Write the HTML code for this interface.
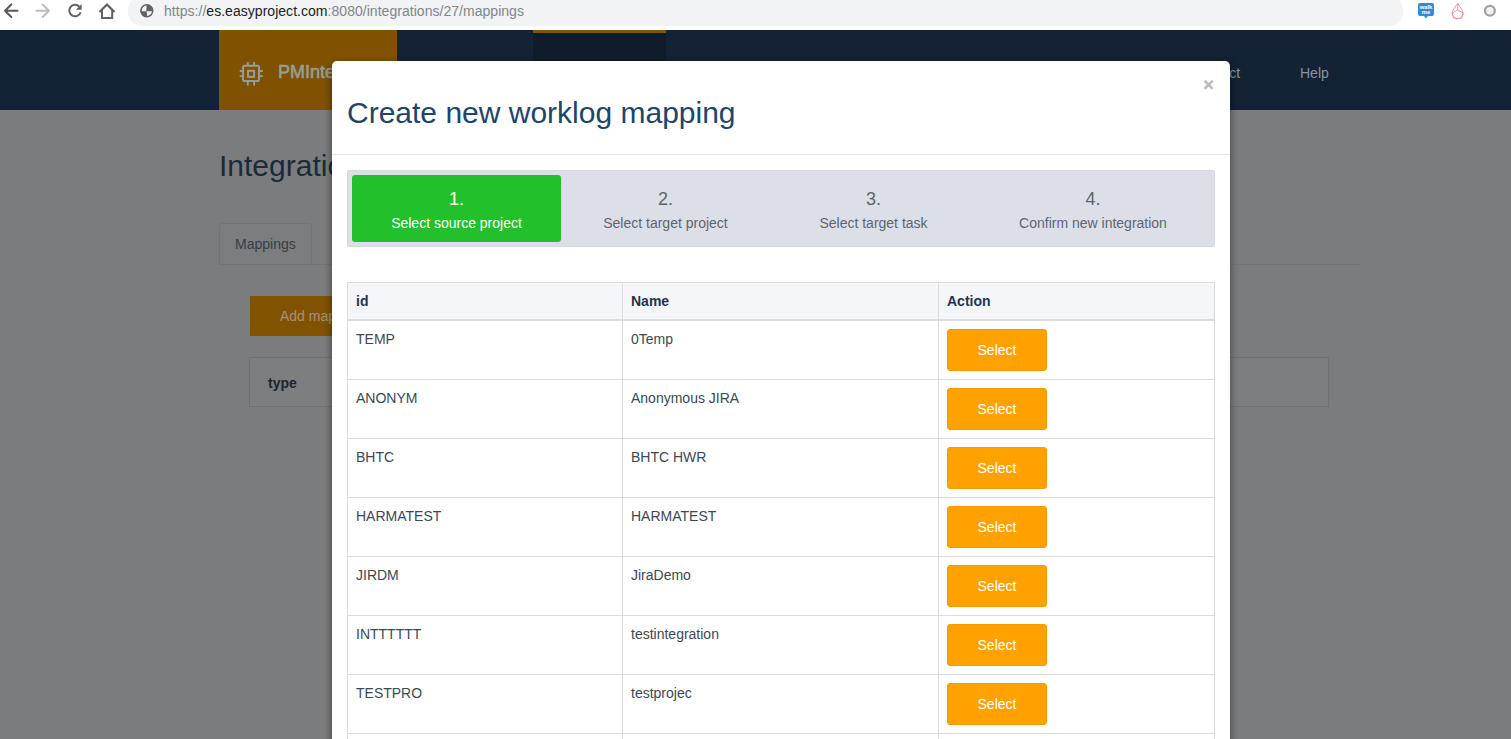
<!DOCTYPE html>
<html><head><meta charset="utf-8">
<style>
*{box-sizing:border-box;margin:0;padding:0}
html,body{width:1511px;height:739px;overflow:hidden;background:#7b7c7d;font-family:"Liberation Sans",sans-serif}
.abs{position:absolute}
#chrome{position:absolute;left:0;top:0;width:1511px;height:30px;background:#fff}
#url{position:absolute;left:128px;top:-4px;width:1275px;height:29.5px;background:#f1f3f4;border-radius:14px}
#urltext{position:absolute;left:164px;top:3px;font-size:14px;color:#80868b;white-space:nowrap;letter-spacing:0.035px}
#urltext b{font-weight:normal;color:#202124}
#hdr{position:absolute;left:0;top:30px;width:1511px;height:80px;background:#132234}
#logo{position:absolute;left:219px;top:30px;width:178px;height:80px;background:#805200}
#logotext{position:absolute;left:278px;top:62px;font-size:18px;color:#959d95;-webkit-text-stroke:0.6px #959d95}
#activebar{position:absolute;left:533px;top:30px;width:133px;height:3px;background:#7d5410}
#activebg{position:absolute;left:533px;top:33px;width:133px;height:77px;background:#111c2b}
.nav{position:absolute;top:65px;font-size:14px;color:#8b949e}
#page-title{position:absolute;left:219px;top:149px;font-size:30px;color:#1b2a3b}
#tab{position:absolute;left:219px;top:223px;width:93px;height:42px;border:1px solid #737475;border-bottom:none;border-radius:4px 4px 0 0;background:#7c7d7e}
#tabtext{position:absolute;left:235px;top:236px;font-size:14px;color:#383e45}
#tabline{position:absolute;left:219px;top:264px;width:1141px;height:1px;background:#737475}
#addbtn{position:absolute;left:250px;top:296px;width:120px;height:40px;background:#815300;border-radius:1px}
#addtext{position:absolute;left:280px;top:308px;font-size:14px;color:#a09479}
#typetbl{position:absolute;left:249px;top:357px;width:1080px;height:50px;border:1px solid #6f7071;background:#7d7e7f}
#typetext{position:absolute;left:268px;top:375px;font-size:14px;font-weight:bold;color:#1b2530}

#modal{position:absolute;left:332px;top:61px;width:898px;height:700px;background:#fff;border-radius:5px;box-shadow:0 3px 9px rgba(0,0,0,.5)}
#mtitle{position:absolute;left:15px;top:35px;font-size:30px;color:#21446a;white-space:nowrap}
#msep{position:absolute;left:0;top:93px;width:898px;height:1px;background:#e5e5e5}
#steps{position:absolute;left:15px;top:109px;width:868px;height:77px;background:#dcdfe8;border-radius:3px;box-shadow:inset 0 0 0 1px #d6d8e0}
.step{position:absolute;top:5px;height:67px;text-align:center;color:#5e6570}
.step .n{position:absolute;left:0;right:0;top:14px;font-size:18px}
.step .t{position:absolute;left:0;right:0;top:40px;font-size:14px}
#s1{left:5px;width:209px;background:#22c02a;border-radius:3px;color:#fff}
#s2{left:214px;width:209px}
#s3{left:422px;width:209px}
#s4{left:630px;width:232px}

#tbl{position:absolute;left:15px;top:221px;width:868px;height:520px;border:1px solid #dcdcdc;border-bottom:none}
#thead{position:absolute;left:0;top:0;width:866px;height:36px;background:#f5f6f9;border-bottom:0}
.hline{position:absolute;left:0;width:866px;height:1px;background:#dcdcdc}
.vline{position:absolute;top:0;width:1px;height:520px;background:#dcdcdc}
.th{position:absolute;top:8px;font-size:14px;line-height:20px;font-weight:bold;color:#1f3550}
.td{position:absolute;font-size:14px;line-height:20px;color:#3b4954}
.sel{position:absolute;left:599px;width:100px;height:42px;background:#ffa200;color:#fff;border-radius:3px;text-align:center;line-height:40px;font-size:14px;border:1px solid #f39c00}
</style></head>
<body>
<div id="chrome">
  <div id="url"></div>
  <svg class="abs" style="left:0;top:0" width="200" height="25" viewBox="0 0 200 25">
    <path d="M17.5 10.7H5M11.3 4.5L5 10.7l6.3 6.3" stroke="#56595d" stroke-width="2" fill="none" stroke-linecap="round" stroke-linejoin="round"/>
    <path d="M36.5 10.7h12.5M42.7 4.5l6.3 6.2-6.3 6.3" stroke="#bcbcbc" stroke-width="2" fill="none" stroke-linecap="round" stroke-linejoin="round"/>
    <path d="M80.6 12.2A5.8 5.8 0 1 1 79.3 6.6" stroke="#5f6368" stroke-width="2" fill="none"/>
    <path d="M81.6 4v5.7h-5.7z" fill="#5f6368"/>
    <path d="M99.5 12L107 4.5l7.5 7.5" stroke="#5f6368" stroke-width="2.2" fill="none"/>
    <path d="M102 10v7.9h10.2V10" stroke="#5f6368" stroke-width="2" fill="none"/>
    <circle cx="146.8" cy="10.7" r="6.7" fill="#5f6368"/>
    <path d="M141.7 11.3C141.7 8.2 143.6 5.9 146.4 5.6L146.6 7.6C145.7 8.7 147.2 10.1 146.1 11.3Z M152 11.3C151.8 14 149.8 15.8 146.9 15.9L147.2 14.2C146.3 13.3 147.4 12.2 146.4 11.3Z" fill="#f1f3f4"/>
  </svg>
  <div id="urltext">https://<b>es.easyproject.com</b>:8080/integrations/27/mappings</div>
  <svg class="abs" style="left:1410px;top:0" width="101" height="25" viewBox="1410 0 101 25">
    <path d="M1420 3h12a2 2 0 0 1 2 2v9a2 2 0 0 1-2 2h-4l-2 2.4-2-2.4h-4a2 2 0 0 1-2-2V5a2 2 0 0 1 2-2z" fill="#2d8ed6"/>
    <text x="1426" y="9.3" font-size="5.8" font-weight="bold" fill="#fff" text-anchor="middle" font-family="Liberation Sans">walk</text>
    <text x="1426" y="14.3" font-size="5.8" font-weight="bold" fill="#fff" text-anchor="middle" font-family="Liberation Sans">me</text>
    <path d="M1457.6 3.2C1455.8 6.5 1452 10.5 1452 13.5a5.6 5.4 0 0 0 11.2 0c0-3-3.8-7-5.6-10.3z M1457.6 3.2V10.1M1452.3 12.8L1457.6 10.1 1463 12.8 1461.5 18.3H1453.8z" stroke="#ea8f98" stroke-width="0.9" fill="none" stroke-linejoin="round"/>
    <circle cx="1489.9" cy="10.8" r="4.9" stroke="#a2a2a2" stroke-width="2.3" fill="#f2f2f2"/>
  </svg>
</div>
<div id="hdr"></div><div class="abs" style="left:0;top:105px;width:1511px;height:5px;background:#102038"></div>
<div id="logo"></div>
<svg class="abs" style="left:0;top:0" width="300" height="100" viewBox="0 0 300 100"><g stroke="#959d95" fill="none"><rect x="243.1" y="65.7" width="15.9" height="15.3" rx="1.5" stroke-width="2"/><rect x="248" y="70.8" width="6.1" height="6.1" stroke-width="2"/><path d="M247.8 62V65.7M254.1 62V65.7M247.8 81V85.6M254.1 81V85.6M239.7 71H243.1M239.7 76.1H243.1M259 71H262.8M259 76.1H262.8" stroke-width="1.9"/></g></svg>
<div id="logotext">PMIntegrations</div>
<div id="activebg"></div>
<div id="activebar"></div>
<div class="nav" style="left:1192px">Contact</div>
<div class="nav" style="left:1300px">Help</div>

<div id="page-title">Integrations</div>
<div id="tab"></div><div id="tabtext">Mappings</div>
<div id="tabline"></div>
<div id="addbtn"></div><div id="addtext">Add mapping</div>
<div id="typetbl"></div><div id="typetext">type</div>

<div id="modal">
  <div id="mtitle">Create new worklog mapping</div>
  <svg class="abs" style="left:868px;top:15px" width="20" height="20" viewBox="1200 76 20 20"><path d="M1204.5 80.7l8.2 8.2M1212.7 80.7l-8.2 8.2" stroke="#bcbcbc" stroke-width="2.6"/></svg>
  <div id="msep"></div>
  <div id="steps">
    <div class="step" id="s1"><div class="n">1.</div><div class="t">Select source project</div></div>
    <div class="step" id="s2"><div class="n">2.</div><div class="t">Select target project</div></div>
    <div class="step" id="s3"><div class="n">3.</div><div class="t">Select target task</div></div>
    <div class="step" id="s4"><div class="n">4.</div><div class="t">Confirm new integration</div></div>
  </div>
  <div id="tbl">
    <div id="thead"></div>
    <div class="hline" style="top:36px;height:2px"></div>
    <div class="hline" style="top:96px"></div>
    <div class="hline" style="top:155px"></div>
    <div class="hline" style="top:214px"></div>
    <div class="hline" style="top:273px"></div>
    <div class="hline" style="top:332px"></div>
    <div class="hline" style="top:391px"></div>
    <div class="hline" style="top:450px"></div>
    <div class="hline" style="top:509px"></div>
    <div class="vline" style="left:274px"></div>
    <div class="vline" style="left:590px"></div>
    <div class="th" style="left:8px">id</div>
    <div class="th" style="left:283px">Name</div>
    <div class="th" style="left:599px">Action</div>

    <div class="td" style="left:8px;top:46px">TEMP</div><div class="td" style="left:283px;top:46px">0Temp</div><div class="sel" style="top:46px">Select</div>
    <div class="td" style="left:8px;top:105px">ANONYM</div><div class="td" style="left:283px;top:105px">Anonymous JIRA</div><div class="sel" style="top:105px">Select</div>
    <div class="td" style="left:8px;top:164px">BHTC</div><div class="td" style="left:283px;top:164px">BHTC HWR</div><div class="sel" style="top:164px">Select</div>
    <div class="td" style="left:8px;top:223px">HARMATEST</div><div class="td" style="left:283px;top:223px">HARMATEST</div><div class="sel" style="top:223px">Select</div>
    <div class="td" style="left:8px;top:282px">JIRDM</div><div class="td" style="left:283px;top:282px">JiraDemo</div><div class="sel" style="top:282px">Select</div>
    <div class="td" style="left:8px;top:341px">INTTTTTT</div><div class="td" style="left:283px;top:341px">testintegration</div><div class="sel" style="top:341px">Select</div>
    <div class="td" style="left:8px;top:400px">TESTPRO</div><div class="td" style="left:283px;top:400px">testprojec</div><div class="sel" style="top:400px">Select</div>
    <div class="td" style="left:8px;top:459px">XX</div><div class="td" style="left:283px;top:459px">xx</div><div class="sel" style="top:459px">Select</div>
  </div>
</div>
</body></html>
